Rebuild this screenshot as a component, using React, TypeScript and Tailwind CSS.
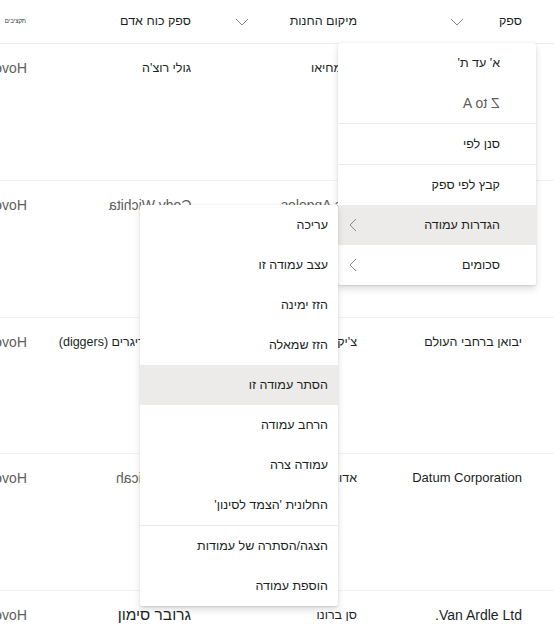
import React from 'react';

const font = { fontFamily: '"Liberation Sans", "Noto Sans", Arial, sans-serif' };

const ChevronDown: React.FC = () => (
  <svg width="14" height="8" viewBox="0 0 14 8" fill="none" className="shrink-0">
    <path d="M1 1l6 6 6-6" stroke="#8a8886" strokeWidth="1" />
  </svg>
);

const ChevronLeft: React.FC = () => (
  <svg width="8" height="14" viewBox="0 0 8 14" fill="none" className="shrink-0">
    <path d="M7 1L1 7l6 6" stroke="#8a8886" strokeWidth="1" />
  </svg>
);

const Mirror: React.FC<{ children: React.ReactNode }> = ({ children }) => (
  <span dir="ltr" className="inline-block -scale-x-100 whitespace-nowrap">
    {children}
  </span>
);

type Cell = { node: React.ReactNode; gray?: boolean; size?: string };

const widths = ['w-[188px] pr-[32px]', 'w-[134px] pr-[9px]', 'w-[180px] pr-[41px]', 'w-[52px] pr-[25px]'];

const hove = { node: <Mirror>Hove Street</Mirror>, gray: true, size: 'text-[14px]' };

const rows: Cell[][] = [
  [
    { node: 'אינוויקטוס' },
    { node: 'סן מחיאו' },
    { node: "גולי רוצ'ה" },
    hove,
  ],
  [
    { node: 'קונטוסו' },
    { node: <Mirror>Los Angeles</Mirror>, gray: true, size: 'text-[14px]' },
    { node: <Mirror>Cody Wichita</Mirror>, gray: true, size: 'text-[14px]' },
    hove,
  ],
  [
    { node: 'יבואן ברחבי העולם' },
    { node: "צ'יקו" },
    { node: 'מחפרים דיגרים (diggers)' },
    hove,
  ],
  [
    { node: 'Datum Corporation', size: 'text-[13px]' },
    { node: 'אדוני' },
    { node: <Mirror>Noah Micah</Mirror>, gray: true, size: 'text-[14px]' },
    hove,
  ],
  [
    { node: 'Van Ardle Ltd.', size: 'text-[14px]' },
    { node: 'סן ברונו' },
    { node: 'גרובר סימון', size: 'text-[15.5px]' },
    hove,
  ],
];

type MenuItem = { label: React.ReactNode; sub?: boolean; active?: boolean; divider?: boolean };

const sortMenu: MenuItem[] = [
  { label: "א' עד ת'" },
  { label: <span className="text-[#605e5c] text-[14px]"><Mirror>Z to A</Mirror></span> },
  { label: 'סנן לפי', divider: true },
  { label: 'קבץ לפי ספק', divider: true },
  { label: 'הגדרות עמודה', sub: true, active: true },
  { label: 'סכומים', sub: true },
];

const columnMenu: MenuItem[] = [
  { label: 'עריכה' },
  { label: 'עצב עמודה זו' },
  { label: 'הזז ימינה' },
  { label: 'הזז שמאלה' },
  { label: 'הסתר עמודה זו', active: true },
  { label: 'הרחב עמודה' },
  { label: 'עמודה צרה' },
  { label: "החלונית 'הצמד לסינון'" },
  { label: 'הצגה/הסתרה של עמודות', divider: true },
  { label: 'הוספת עמודה' },
];

const Menu: React.FC<{ items: MenuItem[]; className: string; padRight: string }> = ({ items, className, padRight }) => (
  <div
    dir="rtl"
    className={`absolute bg-white rounded-[2px] shadow-[0_3.2px_7.2px_rgba(0,0,0,0.13),0_0.6px_1.8px_rgba(0,0,0,0.11)] ${className}`}
  >
    {items.map((item, i) => (
      <div key={i} className={item.divider ? 'border-t border-[#edebe9]' : ''}>
        <div
          className={`h-10 flex items-center justify-between ${padRight} pl-[11px] text-[12.5px] text-[#201f1e] ${
            item.active ? 'bg-[#edebe9]' : ''
          }`}
        >
          <span className="whitespace-nowrap">{item.label}</span>
          {item.sub && <ChevronLeft />}
        </div>
      </div>
    ))}
  </div>
);

const App: React.FC = () => {
  return (
    <div style={font} className="relative w-[554px] h-[631px] overflow-hidden bg-white">
      {/* header */}
      <div dir="rtl" className="flex h-[44px] border-b border-[#edebe9] text-[12.5px] text-[#201f1e]">
        <div className="w-[188px] pr-[32px] flex items-center gap-[35px]">
          <span>ספק</span>
          <ChevronDown />
        </div>
        <div className="w-[134px] pr-[9px] flex items-center gap-[41px]">
          <span className="whitespace-nowrap">מיקום החנות</span>
          <ChevronDown />
        </div>
        <div className="w-[180px] pr-[41px] flex items-center">
          <span className="whitespace-nowrap">ספק כוח אדם</span>
        </div>
        <div className="w-[52px] pr-[26px] flex items-center">
          <span className="text-[6px] whitespace-nowrap text-[#323130]">תקציבים</span>
        </div>
      </div>

      {/* rows */}
      {rows.map((row, r) => (
        <div key={r} dir="rtl" className="flex h-[136.75px] border-b border-[#f3f2f1]">
          {row.map((cell, c) => (
            <div key={c} className={`${widths[c]} pt-[14px]`}>
              <div
                className={`whitespace-nowrap leading-[20px] ${cell.size ?? 'text-[12.5px]'} ${
                  cell.gray ? 'text-[#605e5c]' : 'text-[#201f1e]'
                }`}
              >
                {cell.node}
              </div>
            </div>
          ))}
        </div>
      ))}

      <Menu items={sortMenu} className="left-[338px] top-[43px] w-[198px]" padRight="pr-[36px]" />
      <Menu items={columnMenu} className="left-[140px] top-[205px] w-[198px]" padRight="pr-[10px]" />
    </div>
  );
};

export default App;
